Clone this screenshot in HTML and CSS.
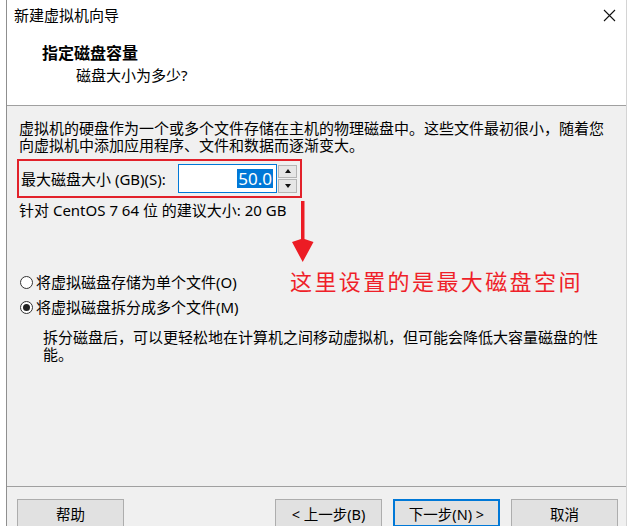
FILE: index.html
```html
<!DOCTYPE html>
<html lang="zh-CN">
<head>
<meta charset="utf-8">
<title>新建虚拟机向导</title>
<link rel="stylesheet" href="styles.css">
</head>
<body>
<div class="window">
  <div class="titlebar">
    <span class="title">新建虚拟机向导</span>
    <svg class="close" width="13" height="13" viewBox="0 0 13 13"><path d="M1 1 L12 12 M12 1 L1 12" stroke="#111" stroke-width="1.1" fill="none"/></svg>
  </div>
  <div class="header">
    <div class="heading">指定磁盘容量</div>
    <div class="subheading">磁盘大小为多少?</div>
  </div>
  <div class="main">
    <p class="intro">虚拟机的硬盘作为一个或多个文件存储在主机的物理磁盘中。这些文件最初很小，随着您向虚拟机中添加应用程序、文件和数据而逐渐变大。</p>
    <div class="size-box">
      <span class="size-label">最大磁盘大小 (GB)(S):</span>
      <div class="spin-input"><span class="sel">50.0</span></div>
      <div class="spinner">
        <span class="spin-btn"><i class="tri-up"></i></span>
        <span class="spin-btn"><i class="tri-down"></i></span>
      </div>
    </div>
    <div class="recommend">针对 CentOS 7 64 位 的建议大小: 20 GB</div>
    <label class="radio first"><span class="circle"></span>将虚拟磁盘存储为单个文件(O)</label>
    <label class="radio"><span class="circle checked"></span>将虚拟磁盘拆分成多个文件(M)</label>
    <p class="desc">拆分磁盘后，可以更轻松地在计算机之间移动虚拟机，但可能会降低大容量磁盘的性能。</p>

    <svg class="arrow" width="24" height="66" viewBox="0 0 24 66"><path d="M9 2 H12.5 V40 L21.5 43 L10.7 63 L0 43 L9 40 Z" fill="#ec1c24"/></svg>
    <div class="note">这里设置的是最大磁盘空间</div>
  </div>
  <div class="footer">
    <button class="btn help">帮助</button>
    <button class="btn">&lt; 上一步(B)</button>
    <button class="btn primary">下一步(N) &gt;</button>
    <button class="btn">取消</button>
  </div>
</div>
</body>
</html>
```
FILE: styles.css
```css
html, body {
  margin: 0;
  padding: 0;
  background: #ffffff;
  overflow: hidden;
}
.window {
  margin-left: 6px;
  width: 621px;
  height: 526px;
  box-sizing: border-box;
  border-left: 1px solid #8f8f8f;
  border-right: 1px solid #d4d4d4;
  display: flex;
  flex-direction: column;
  font-family: "Noto Sans", "Noto Sans CJK SC", sans-serif;
  color: #000;
}
.titlebar {
  height: 30px;
  flex: none;
  display: flex;
  align-items: center;
  justify-content: space-between;
  padding: 0 10px 0 7px;
  background: #fff;
  font-size: 15px;
}
.title { line-height: 20px; }
.close { display: block; margin-top: 1px; }
.header {
  height: 76px;
  flex: none;
  box-sizing: border-box;
  background: #fff;
  border-bottom: 1px solid #a0a0a0;
  padding: 13px 0 0 35px;
}
.heading {
  font-size: 16px;
  font-weight: bold;
  line-height: 20px;
}
.subheading {
  font-size: 15px;
  line-height: 22px;
  margin: 1px 0 0 34px;
}
.main {
  flex: 1;
  position: relative;
  background: #f0f0f0;
  padding: 14px 0 0 12px;
  font-size: 15px;
}
.intro {
  margin: 0;
  width: 592px;
  line-height: 17px;
}
.size-box {
  margin: 5px 0 0 -2px;
  width: 285px;
  height: 39px;
  box-sizing: border-box;
  border: 2px solid #e2212a;
  display: flex;
  align-items: center;
  padding-left: 2px;
}
.size-label {
  width: 157px;
  flex: none;
  white-space: nowrap;
  line-height: 20px;
}
.spin-input {
  width: 99px;
  height: 29px;
  box-sizing: border-box;
  border: 1px solid #0078d7;
  background: #fff;
  display: flex;
  align-items: center;
  justify-content: flex-end;
  padding-right: 3px;
  font-size: 17px;
}
.sel {
  background: #0078d7;
  color: #fff;
  line-height: 19px;
  padding: 0 1px;
}
.spinner {
  margin-left: 1px;
  width: 19px;
  height: 28px;
  display: flex;
  flex-direction: column;
  gap: 1px;
}
.spin-btn {
  flex: 1;
  box-sizing: border-box;
  border: 1px solid #b5b5b5;
  background: #e6e6e6;
  display: flex;
  align-items: center;
  justify-content: center;
}
.tri-up {
  width: 0; height: 0;
  border-left: 3.5px solid transparent;
  border-right: 3.5px solid transparent;
  border-bottom: 4px solid #111;
}
.tri-down {
  width: 0; height: 0;
  border-left: 3.5px solid transparent;
  border-right: 3.5px solid transparent;
  border-top: 4px solid #111;
}
.recommend {
  margin-top: 4px;
  line-height: 17px;
}
.radio {
  display: flex;
  align-items: center;
  line-height: 17px;
  margin-top: 8px;
}
.radio.first { margin-top: 55px; }
.circle {
  width: 13px;
  height: 13px;
  box-sizing: border-box;
  border: 1px solid #333;
  border-radius: 50%;
  background: #fff;
  margin: 0 3px 0 1px;
  display: flex;
  align-items: center;
  justify-content: center;
}
.circle.checked::after {
  content: "";
  width: 7px;
  height: 7px;
  border-radius: 50%;
  background: #222;
}
.desc {
  margin: 13px 0 0 24px;
  width: 562px;
  line-height: 16.5px;
}
.arrow {
  position: absolute;
  left: 285px;
  top: 93px;
}
.note {
  position: absolute;
  left: 283px;
  top: 159px;
  font-family: "Noto Sans CJK SC", sans-serif;
  font-size: 22px;
  line-height: 30px;
  letter-spacing: 2.4px;
  color: #ef1f29;
  white-space: nowrap;
}
.footer {
  height: 40px;
  flex: none;
  box-sizing: border-box;
  border-top: 1px solid #a0a0a0;
  background: #f0f0f0;
  display: flex;
  align-items: flex-start;
  padding: 12px 8px 0 10px;
  gap: 11px;
}
.btn {
  width: 107px;
  height: 28px;
  flex: none;
  box-sizing: border-box;
  border: 1px solid #adadad;
  background: #e1e1e1;
  font-family: "Noto Sans", "Noto Sans CJK SC", sans-serif;
  font-size: 14.5px;
  color: #000;
  padding: 0;
}
.btn.help { margin-right: auto; }
.btn.primary {
  border: 2px solid #0078d7;
}
```
